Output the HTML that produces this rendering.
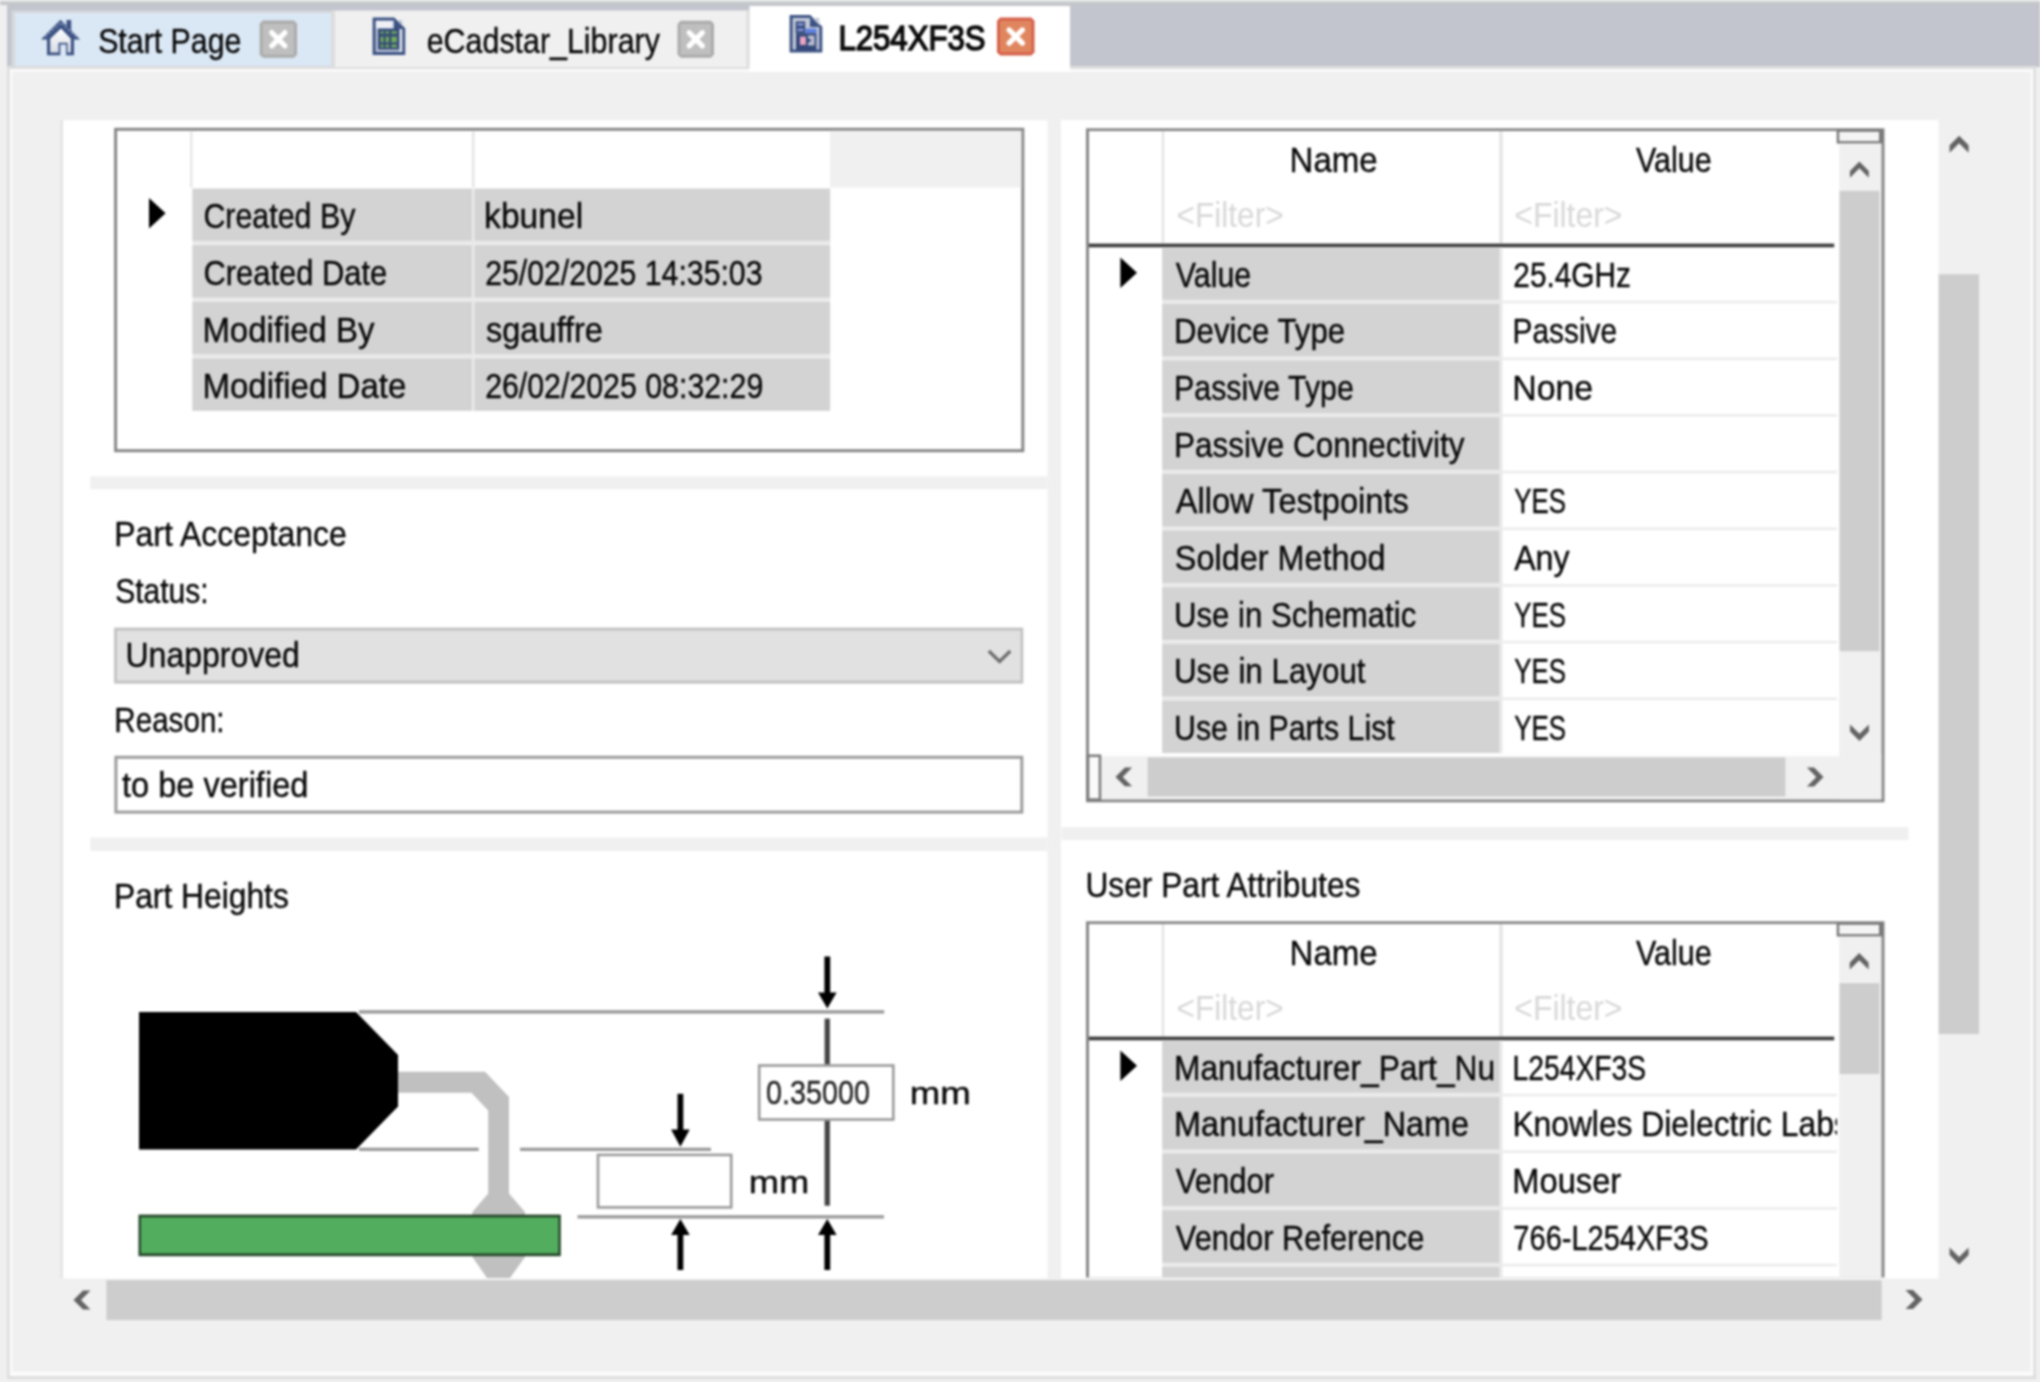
<!DOCTYPE html>
<html><head><meta charset="utf-8"><style>
html,body{margin:0;padding:0;width:2040px;height:1382px;overflow:hidden;background:#f0f0f0}
svg{display:block;font-family:"Liberation Sans", sans-serif;filter:blur(1px)}
</style></head><body>
<svg width="2040" height="1382" viewBox="0 0 2040 1382">
<defs><clipPath id="clipv"><rect x="1500" y="900" width="336.9" height="400"/></clipPath></defs>
<rect x="0.00" y="0.00" width="2040.00" height="1382.00" fill="#f0f0f0" />
<rect x="0.00" y="0.00" width="2040.00" height="1.60" fill="#e3ebea" />
<rect x="0.00" y="1.60" width="2040.00" height="3.40" fill="#c5c6c9" />
<rect x="7.00" y="5.00" width="2033.00" height="62.00" fill="#c2c5ce" />
<rect x="7.00" y="66.00" width="2029.00" height="1313.00" fill="#dedede" />
<rect x="9.70" y="69.00" width="2023.60" height="1307.00" fill="#fbfbfb" />
<rect x="12.20" y="71.80" width="2018.30" height="1299.70" fill="#f0f0f0" />
<rect x="11.50" y="10.50" width="323.50" height="56.50" fill="#d6d8dc" />
<rect x="15.00" y="13.00" width="316.50" height="53.00" fill="#dae7f4" />
<rect x="331.50" y="10.50" width="3.50" height="56.50" fill="#dcdcdc" />
<rect x="335.00" y="10.50" width="413.00" height="56.50" fill="#f0f0f0" />
<rect x="746.50" y="10.50" width="3.00" height="56.50" fill="#dedede" />
<rect x="749.50" y="6.00" width="320.50" height="66.00" fill="#ffffff" />
<rect x="60.50" y="120.30" width="2.50" height="1158.20" fill="#e3e3e3" />
<rect x="63.00" y="120.30" width="984.50" height="1158.20" fill="#ffffff" />
<rect x="1061.00" y="120.00" width="877.60" height="1158.50" fill="#ffffff" />
<rect x="90.20" y="476.50" width="957.30" height="12.70" fill="#f0f0f0" />
<rect x="90.20" y="837.50" width="957.30" height="13.50" fill="#f0f0f0" />
<rect x="1061.50" y="827.00" width="847.00" height="13.00" fill="#f0f0f0" />
<rect x="106.40" y="1280.20" width="1775.30" height="39.90" fill="#cdcdcd" />
<rect x="1938.60" y="274.30" width="40.40" height="759.70" fill="#cdcdcd" />
<rect x="114.10" y="127.80" width="910.20" height="324.40" fill="#878787" />
<rect x="117.10" y="130.80" width="904.20" height="318.40" fill="#ffffff" />
<rect x="830.10" y="130.80" width="191.20" height="56.70" fill="#f0f0f0" />
<rect x="190.00" y="130.80" width="2.40" height="56.70" fill="#e6e6e6" />
<rect x="471.80" y="130.80" width="2.80" height="56.70" fill="#e6e6e6" />
<rect x="192.40" y="188.60" width="637.70" height="222.21" fill="#eaeaea" />
<rect x="192.40" y="188.60" width="279.40" height="52.20" fill="#d3d3d3" />
<rect x="474.60" y="188.60" width="355.50" height="52.20" fill="#d3d3d3" />
<rect x="192.40" y="245.27" width="279.40" height="52.20" fill="#d3d3d3" />
<rect x="474.60" y="245.27" width="355.50" height="52.20" fill="#d3d3d3" />
<rect x="192.40" y="301.94" width="279.40" height="52.20" fill="#d3d3d3" />
<rect x="474.60" y="301.94" width="355.50" height="52.20" fill="#d3d3d3" />
<rect x="192.40" y="358.61" width="279.40" height="52.20" fill="#d3d3d3" />
<rect x="474.60" y="358.61" width="355.50" height="52.20" fill="#d3d3d3" />
<path d="M149,198 L165.6,213.2 L149,228.5 Z" fill="#000" stroke="none" stroke-width="0" />
<rect x="114.10" y="627.60" width="909.20" height="56.00" fill="#c2c2c2" />
<rect x="116.90" y="630.60" width="903.60" height="50.00" fill="#e1e1e1" />
<path d="M988.8,651 L999.6,661.4 L1010.3,651" fill="none" stroke="#6d6d6d" stroke-width="3.2" />
<rect x="114.40" y="755.80" width="908.90" height="57.80" fill="#9c9c9c" />
<rect x="117.40" y="758.80" width="902.90" height="51.80" fill="#ffffff" />
<path d="M398,1071.8 L485,1071.8 L509,1097 L509,1193.5 L525,1212 L525,1257 L510,1278 L487,1278 L472.4,1257 L472.4,1212 L488.2,1193.5 L488.2,1110.6 L471.4,1092.8 L398,1092.8 Z" fill="#c0c0c0" stroke="none" stroke-width="0" />
<path d="M139,1012 L356,1012 L398,1055 L398,1106.4 L356,1149.4 L139,1149.4 Z" fill="#000" stroke="none" stroke-width="0" />
<rect x="138.50" y="1214.60" width="422.30" height="41.60" fill="#26472a" />
<rect x="141.00" y="1217.40" width="417.30" height="36.00" fill="#52ae5e" />
<rect x="359.00" y="1010.20" width="525.20" height="3.40" fill="#9a9a9a" />
<rect x="359.00" y="1147.70" width="119.70" height="3.30" fill="#9a9a9a" />
<rect x="520.00" y="1147.70" width="191.00" height="3.30" fill="#9a9a9a" />
<rect x="577.50" y="1215.20" width="306.50" height="3.30" fill="#9a9a9a" />
<rect x="824.60" y="1018.60" width="5.30" height="45.90" fill="#444" />
<rect x="824.60" y="1120.50" width="5.30" height="85.20" fill="#444" />
<rect x="824.40" y="956.50" width="5.80" height="38.00" fill="#000" />
<path d="M818.0,992.5 L836.5999999999999,992.5 L827.3,1008.5 Z" fill="#000" stroke="none" stroke-width="0" />
<rect x="677.50" y="1093.80" width="5.80" height="37.70" fill="#000" />
<path d="M671.1,1129.5 L689.6999999999999,1129.5 L680.4,1146.7 Z" fill="#000" stroke="none" stroke-width="0" />
<rect x="677.50" y="1233.00" width="5.80" height="37.00" fill="#000" />
<path d="M671.1,1235 L689.6999999999999,1235 L680.4,1219 Z" fill="#000" stroke="none" stroke-width="0" />
<rect x="824.40" y="1233.00" width="5.80" height="37.00" fill="#000" />
<path d="M818.0,1235 L836.5999999999999,1235 L827.3,1219 Z" fill="#000" stroke="none" stroke-width="0" />
<rect x="757.90" y="1064.20" width="136.70" height="56.60" fill="#9a9a9a" />
<rect x="760.50" y="1066.80" width="131.50" height="51.40" fill="#fff" />
<rect x="596.70" y="1153.60" width="135.80" height="55.10" fill="#9a9a9a" />
<rect x="599.30" y="1156.20" width="130.60" height="49.90" fill="#fff" />
<rect x="1086.00" y="128.30" width="798.50" height="674.00" fill="#878787" />
<rect x="1089.00" y="131.10" width="792.30" height="668.20" fill="#ffffff" />
<rect x="1836.70" y="129.30" width="46.30" height="14.30" fill="#7a7a7a" />
<rect x="1839.20" y="131.80" width="39.80" height="9.30" fill="#f4f4f4" />
<rect x="1839.30" y="143.60" width="42.00" height="655.70" fill="#f0f0f0" />
<rect x="1839.60" y="190.90" width="39.80" height="460.30" fill="#cdcdcd" />
<rect x="1161.80" y="131.10" width="2.40" height="112.20" fill="#e3e3e3" />
<rect x="1499.40" y="131.10" width="3.20" height="112.20" fill="#e3e3e3" />
<rect x="1089.00" y="243.60" width="745.20" height="3.70" fill="#3c3c3c" />
<rect x="1162.20" y="247.30" width="340.40" height="506.00" fill="#eaeaea" />
<rect x="1162.20" y="247.30" width="337.20" height="52.40" fill="#d3d3d3" />
<rect x="1502.60" y="300.80" width="334.30" height="2.50" fill="#ebebeb" />
<rect x="1162.20" y="303.97" width="337.20" height="52.40" fill="#d3d3d3" />
<rect x="1502.60" y="357.47" width="334.30" height="2.50" fill="#ebebeb" />
<rect x="1162.20" y="360.64" width="337.20" height="52.40" fill="#d3d3d3" />
<rect x="1502.60" y="414.14" width="334.30" height="2.50" fill="#ebebeb" />
<rect x="1162.20" y="417.31" width="337.20" height="52.40" fill="#d3d3d3" />
<rect x="1502.60" y="470.81" width="334.30" height="2.50" fill="#ebebeb" />
<rect x="1162.20" y="473.98" width="337.20" height="52.40" fill="#d3d3d3" />
<rect x="1502.60" y="527.48" width="334.30" height="2.50" fill="#ebebeb" />
<rect x="1162.20" y="530.65" width="337.20" height="52.40" fill="#d3d3d3" />
<rect x="1502.60" y="584.15" width="334.30" height="2.50" fill="#ebebeb" />
<rect x="1162.20" y="587.32" width="337.20" height="52.40" fill="#d3d3d3" />
<rect x="1502.60" y="640.82" width="334.30" height="2.50" fill="#ebebeb" />
<rect x="1162.20" y="643.99" width="337.20" height="52.40" fill="#d3d3d3" />
<rect x="1502.60" y="697.49" width="334.30" height="2.50" fill="#ebebeb" />
<rect x="1162.20" y="700.66" width="337.20" height="52.40" fill="#d3d3d3" />
<rect x="1502.60" y="754.16" width="334.30" height="2.50" fill="#ebebeb" />
<path d="M1120.4,257.6 L1137,272.8 L1120.4,288 Z" fill="#000" stroke="none" stroke-width="0" />
<rect x="1089.00" y="753.30" width="792.30" height="46.00" fill="#f0f0f0" />
<rect x="1089.00" y="753.30" width="750.30" height="3.00" fill="#ffffff" />
<rect x="1147.60" y="757.40" width="637.80" height="39.10" fill="#cdcdcd" />
<rect x="1086.80" y="754.50" width="14.40" height="46.30" fill="#7a7a7a" />
<rect x="1089.30" y="757.00" width="9.40" height="41.30" fill="#fafafa" />
<rect x="1086.00" y="921.30" width="798.50" height="356.20" fill="#878787" />
<rect x="1089.00" y="924.10" width="792.30" height="353.40" fill="#ffffff" />
<rect x="1836.70" y="922.30" width="46.30" height="14.30" fill="#7a7a7a" />
<rect x="1839.20" y="924.80" width="39.80" height="9.30" fill="#f4f4f4" />
<rect x="1839.30" y="936.60" width="42.00" height="340.90" fill="#f0f0f0" />
<rect x="1839.60" y="983.20" width="39.80" height="90.80" fill="#cdcdcd" />
<rect x="1161.80" y="924.10" width="2.40" height="112.20" fill="#e3e3e3" />
<rect x="1499.40" y="924.10" width="3.20" height="112.20" fill="#e3e3e3" />
<rect x="1089.00" y="1036.60" width="745.20" height="3.70" fill="#3c3c3c" />
<rect x="1162.20" y="1040.30" width="340.40" height="237.20" fill="#eaeaea" />
<rect x="1162.20" y="1040.30" width="337.20" height="52.40" fill="#d3d3d3" />
<rect x="1502.60" y="1093.80" width="334.30" height="2.50" fill="#ebebeb" />
<rect x="1162.20" y="1096.97" width="337.20" height="52.40" fill="#d3d3d3" />
<rect x="1502.60" y="1150.47" width="334.30" height="2.50" fill="#ebebeb" />
<rect x="1162.20" y="1153.64" width="337.20" height="52.40" fill="#d3d3d3" />
<rect x="1502.60" y="1207.14" width="334.30" height="2.50" fill="#ebebeb" />
<rect x="1162.20" y="1210.31" width="337.20" height="52.40" fill="#d3d3d3" />
<rect x="1502.60" y="1263.81" width="334.30" height="2.50" fill="#ebebeb" />
<rect x="1162.20" y="1266.98" width="337.20" height="10.52" fill="#d3d3d3" />
<path d="M1120.4,1050.6 L1137,1065.8 L1120.4,1081 Z" fill="#000" stroke="none" stroke-width="0" />
<path d="M1949.60,145.20 L1959.10,135.70 L1968.60,145.20 L1968.60,152.70 L1959.10,143.20 L1949.60,152.70 Z" fill="#636363" stroke="none" stroke-width="0" />
<path d="M1949.60,1255.00 L1959.10,1264.50 L1968.60,1255.00 L1968.60,1247.50 L1959.10,1257.00 L1949.60,1247.50 Z" fill="#636363" stroke="none" stroke-width="0" />
<path d="M83.00,1290.50 L73.50,1300.00 L83.00,1309.50 L90.50,1309.50 L81.00,1300.00 L90.50,1290.50 Z" fill="#636363" stroke="none" stroke-width="0" />
<path d="M1913.00,1290.00 L1922.50,1299.50 L1913.00,1309.00 L1905.50,1309.00 L1915.00,1299.50 L1905.50,1290.00 Z" fill="#636363" stroke="none" stroke-width="0" />
<path d="M1850.00,170.90 L1859.40,161.50 L1868.80,170.90 L1868.80,177.70 L1859.40,168.30 L1850.00,177.70 Z" fill="#636363" stroke="none" stroke-width="0" />
<path d="M1850.10,731.60 L1859.50,741.00 L1868.90,731.60 L1868.90,724.40 L1859.50,733.80 L1850.10,724.40 Z" fill="#636363" stroke="none" stroke-width="0" />
<path d="M1849.80,962.40 L1859.20,953.00 L1868.60,962.40 L1868.60,969.60 L1859.20,960.20 L1849.80,969.60 Z" fill="#636363" stroke="none" stroke-width="0" />
<path d="M1124.90,767.50 L1115.50,776.90 L1124.90,786.30 L1132.10,786.30 L1122.70,776.90 L1132.10,767.50 Z" fill="#636363" stroke="none" stroke-width="0" />
<path d="M1814.10,767.60 L1823.50,777.00 L1814.10,786.40 L1806.90,786.40 L1816.30,777.00 L1806.90,767.60 Z" fill="#636363" stroke="none" stroke-width="0" />
<path d="M262.9,20.6 L293.8,20.6 L297,23.8 L297,54.599999999999994 L293.8,57.8 L262.9,57.8 L259.7,54.599999999999994 L259.7,23.8 Z" fill="#ababab" stroke="none" stroke-width="0" />
<rect x="262.70" y="23.60" width="31.30" height="31.20" fill="#bfbfbf" />
<path d="M271.75,32.6 L284.95000000000005,45.800000000000004 M284.95000000000005,32.6 L271.75,45.800000000000004" fill="none" stroke="#fff" stroke-width="5.2" stroke-linecap="round"/>
<path d="M680.7,20.8 L710.8,20.8 L714,24.0 L714,54.599999999999994 L710.8,57.8 L680.7,57.8 L677.5,54.599999999999994 L677.5,24.0 Z" fill="#ababab" stroke="none" stroke-width="0" />
<rect x="680.50" y="23.80" width="30.50" height="31.00" fill="#bfbfbf" />
<path d="M689.15,32.699999999999996 L702.35,45.9 M702.35,32.699999999999996 L689.15,45.9" fill="none" stroke="#fff" stroke-width="5.2" stroke-linecap="round"/>
<path d="M1000.2,17.6 L1031.3,17.6 L1034.5,20.8 L1034.5,52.199999999999996 L1031.3,55.4 L1000.2,55.4 L997,52.199999999999996 L997,20.8 Z" fill="#d5604a" stroke="none" stroke-width="0" />
<rect x="1000.00" y="20.60" width="31.50" height="31.80" fill="#e0865f" />
<path d="M1009.15,29.9 L1022.35,43.1 M1022.35,29.9 L1009.15,43.1" fill="none" stroke="#fff" stroke-width="5.2" stroke-linecap="round"/>
<path d="M41,39.5 L60.5,19.8 L66.5,25.8 L66.5,20 L71.2,20 L71.2,30.5 L80,39.5 L74,39.5 L74,55.2 L66.1,55.2 L66.1,44.6 L60.3,44.6 L60.3,55.2 L47,55.2 L47,39.5 Z" fill="#3c5283" stroke="none" stroke-width="0" />
<defs><linearGradient id="hg" x1="0" y1="0" x2="0" y2="1"><stop offset="0" stop-color="#ffffff"/><stop offset="1" stop-color="#d9dce6"/></linearGradient></defs>
<path d="M50.2,38.8 L61,28.6 L70.8,38.8 L70.8,52.5 L67.6,52.5 L67.6,42.8 L58.5,42.8 L58.5,52.5 L50.2,52.5 Z" fill="url(#hg)" stroke="none" stroke-width="0" />
<path d="M45.5,36.5 L60.8,22.5 L76,36.5" fill="none" stroke="#8e9dbf" stroke-width="1.6" stroke-dasharray="2.2 2.2"/>
<path d="M372.6,17.4 L394,17.4 L405.2,28.3 L405.2,55 L372.6,55 Z" fill="#3c5283" stroke="none" stroke-width="0" />
<rect x="375.60" y="20.40" width="26.60" height="31.60" fill="#b9c0d3" />
<rect x="375.90" y="21.00" width="16.60" height="7.30" fill="#eef0f6" />
<path d="M394,17.4 L394,29 L405.2,29 Z" fill="#3c5283" stroke="none" stroke-width="0" />
<rect x="399.50" y="29.00" width="2.70" height="23.00" fill="#e2e5ee" />
<rect x="378.00" y="28.60" width="21.40" height="21.00" fill="#34497a" />
<rect x="380.60" y="31.20" width="2.90" height="2.50" fill="#72ad5a" />
<rect x="380.60" y="36.60" width="2.90" height="5.80" fill="#72ad5a" />
<rect x="380.60" y="44.60" width="2.90" height="2.90" fill="#72ad5a" />
<rect x="385.60" y="31.20" width="3.30" height="2.50" fill="#72ad5a" />
<rect x="385.60" y="36.60" width="3.30" height="5.80" fill="#72ad5a" />
<rect x="385.60" y="44.60" width="3.30" height="2.90" fill="#72ad5a" />
<rect x="391.40" y="31.20" width="5.40" height="2.50" fill="#72ad5a" />
<rect x="391.40" y="36.60" width="5.40" height="5.80" fill="#72ad5a" />
<rect x="391.40" y="44.60" width="5.40" height="2.90" fill="#72ad5a" />
<path d="M789.6,14.9 L810.2,14.9 L822.3,26.8 L822.3,52.5 L789.6,52.5 Z" fill="#3c5283" stroke="none" stroke-width="0" />
<rect x="792.60" y="17.90" width="26.70" height="31.60" fill="#c3c8d8" />
<path d="M810,15.5 L810,27 L821,27 Z" fill="#3c5283" stroke="none" stroke-width="0" />
<rect x="795.70" y="21.40" width="9.50" height="11.90" fill="#34497a" />
<rect x="797.50" y="23.20" width="6.00" height="2.50" fill="#8b9ad6" />
<rect x="797.50" y="28.60" width="6.00" height="2.60" fill="#8b9ad6" />
<rect x="805.20" y="28.60" width="11.50" height="4.70" fill="#5f80df" />
<rect x="796.00" y="33.30" width="20.50" height="16.70" fill="#34497a" />
<rect x="800.00" y="36.60" width="5.90" height="8.30" fill="#eaa5c2" />
<rect x="808.00" y="35.50" width="6.50" height="10.00" fill="#b9bfcf" />
<path d="M808,38 L811.5,40.5 L808,43 Z" fill="#34497a" stroke="none" stroke-width="0" />
<text x="203.43" y="228.20" font-size="35" fill="#080808" stroke="#080808" stroke-width="0.38" textLength="151.93" lengthAdjust="spacingAndGlyphs">Created By</text>
<text x="484.08" y="228.20" font-size="35" fill="#080808" stroke="#080808" stroke-width="0.38" textLength="99.13" lengthAdjust="spacingAndGlyphs">kbunel</text>
<text x="203.42" y="284.87" font-size="35" fill="#080808" stroke="#080808" stroke-width="0.38" textLength="183.88" lengthAdjust="spacingAndGlyphs">Created Date</text>
<text x="485.14" y="284.87" font-size="35" fill="#080808" stroke="#080808" stroke-width="0.38" textLength="277.33" lengthAdjust="spacingAndGlyphs">25/02/2025 14:35:03</text>
<text x="202.42" y="341.54" font-size="35" fill="#080808" stroke="#080808" stroke-width="0.38" textLength="172.11" lengthAdjust="spacingAndGlyphs">Modified By</text>
<text x="486.00" y="341.54" font-size="35" fill="#080808" stroke="#080808" stroke-width="0.38" textLength="116.86" lengthAdjust="spacingAndGlyphs">sgauffre</text>
<text x="202.41" y="398.21" font-size="35" fill="#080808" stroke="#080808" stroke-width="0.38" textLength="203.97" lengthAdjust="spacingAndGlyphs">Modified Date</text>
<text x="485.13" y="398.21" font-size="35" fill="#080808" stroke="#080808" stroke-width="0.38" textLength="278.14" lengthAdjust="spacingAndGlyphs">26/02/2025 08:32:29</text>
<text x="114.19" y="546.10" font-size="35" fill="#080808" stroke="#080808" stroke-width="0.38" textLength="232.64" lengthAdjust="spacingAndGlyphs">Part Acceptance</text>
<text x="115.14" y="602.50" font-size="35" fill="#080808" stroke="#080808" stroke-width="0.38" textLength="93.50" lengthAdjust="spacingAndGlyphs">Status:</text>
<text x="125.47" y="666.50" font-size="35" fill="#080808" stroke="#080808" stroke-width="0.38" textLength="174.37" lengthAdjust="spacingAndGlyphs">Unapproved</text>
<text x="114.31" y="732.30" font-size="35" fill="#080808" stroke="#080808" stroke-width="0.38" textLength="110.30" lengthAdjust="spacingAndGlyphs">Reason:</text>
<text x="122.00" y="797.00" font-size="35" fill="#080808" stroke="#080808" stroke-width="0.38" textLength="186.36" lengthAdjust="spacingAndGlyphs">to be verified</text>
<text x="113.98" y="907.70" font-size="35" fill="#080808" stroke="#080808" stroke-width="0.38" textLength="174.87" lengthAdjust="spacingAndGlyphs">Part Heights</text>
<text x="766.12" y="1103.60" font-size="32.5" fill="#222" stroke="#222" stroke-width="0.38" textLength="103.83" lengthAdjust="spacingAndGlyphs">0.35000</text>
<text x="909.84" y="1103.60" font-size="31" fill="#080808" stroke="#080808" stroke-width="0.38" textLength="61.02" lengthAdjust="spacingAndGlyphs">mm</text>
<text x="748.66" y="1192.70" font-size="31" fill="#080808" stroke="#080808" stroke-width="0.38" textLength="60.48" lengthAdjust="spacingAndGlyphs">mm</text>
<text x="1289.61" y="171.60" font-size="35" fill="#080808" stroke="#080808" stroke-width="0.38" textLength="88.07" lengthAdjust="spacingAndGlyphs">Name</text>
<text x="1635.90" y="172.00" font-size="35" fill="#080808" stroke="#080808" stroke-width="0.38" textLength="75.78" lengthAdjust="spacingAndGlyphs">Value</text>
<text x="1176.60" y="227.40" font-size="35" fill="#d8d8d8" textLength="107.00" lengthAdjust="spacingAndGlyphs">&lt;Filter&gt;</text>
<text x="1514.29" y="227.40" font-size="35" fill="#d8d8d8" textLength="108.23" lengthAdjust="spacingAndGlyphs">&lt;Filter&gt;</text>
<text x="1175.80" y="286.70" font-size="35" fill="#080808" stroke="#080808" stroke-width="0.38" textLength="75.37" lengthAdjust="spacingAndGlyphs">Value</text>
<text x="1513.35" y="286.70" font-size="35" fill="#080808" stroke="#080808" stroke-width="0.38" textLength="117.53" lengthAdjust="spacingAndGlyphs">25.4GHz</text>
<text x="1174.02" y="343.37" font-size="35" fill="#080808" stroke="#080808" stroke-width="0.38" textLength="171.18" lengthAdjust="spacingAndGlyphs">Device Type</text>
<text x="1512.49" y="343.37" font-size="35" fill="#080808" stroke="#080808" stroke-width="0.38" textLength="104.66" lengthAdjust="spacingAndGlyphs">Passive</text>
<text x="1174.07" y="400.04" font-size="35" fill="#080808" stroke="#080808" stroke-width="0.38" textLength="179.69" lengthAdjust="spacingAndGlyphs">Passive Type</text>
<text x="1512.26" y="400.04" font-size="35" fill="#080808" stroke="#080808" stroke-width="0.38" textLength="80.95" lengthAdjust="spacingAndGlyphs">None</text>
<text x="1174.00" y="456.71" font-size="35" fill="#080808" stroke="#080808" stroke-width="0.38" textLength="290.55" lengthAdjust="spacingAndGlyphs">Passive Connectivity</text>
<text x="1175.80" y="513.38" font-size="35" fill="#080808" stroke="#080808" stroke-width="0.38" textLength="232.96" lengthAdjust="spacingAndGlyphs">Allow Testpoints</text>
<text x="1514.20" y="513.38" font-size="35" fill="#080808" stroke="#080808" stroke-width="0.38" textLength="51.79" lengthAdjust="spacingAndGlyphs">YES</text>
<text x="1174.87" y="570.05" font-size="35" fill="#080808" stroke="#080808" stroke-width="0.38" textLength="210.68" lengthAdjust="spacingAndGlyphs">Solder Method</text>
<text x="1514.20" y="570.05" font-size="35" fill="#080808" stroke="#080808" stroke-width="0.38" textLength="55.34" lengthAdjust="spacingAndGlyphs">Any</text>
<text x="1174.02" y="626.72" font-size="35" fill="#080808" stroke="#080808" stroke-width="0.38" textLength="242.22" lengthAdjust="spacingAndGlyphs">Use in Schematic</text>
<text x="1514.20" y="626.72" font-size="35" fill="#080808" stroke="#080808" stroke-width="0.38" textLength="51.79" lengthAdjust="spacingAndGlyphs">YES</text>
<text x="1174.01" y="683.39" font-size="35" fill="#080808" stroke="#080808" stroke-width="0.38" textLength="191.54" lengthAdjust="spacingAndGlyphs">Use in Layout</text>
<text x="1514.20" y="683.39" font-size="35" fill="#080808" stroke="#080808" stroke-width="0.38" textLength="51.79" lengthAdjust="spacingAndGlyphs">YES</text>
<text x="1174.07" y="740.06" font-size="35" fill="#080808" stroke="#080808" stroke-width="0.38" textLength="220.69" lengthAdjust="spacingAndGlyphs">Use in Parts List</text>
<text x="1514.20" y="740.06" font-size="35" fill="#080808" stroke="#080808" stroke-width="0.38" textLength="51.79" lengthAdjust="spacingAndGlyphs">YES</text>
<text x="1085.40" y="897.00" font-size="35" fill="#080808" stroke="#080808" stroke-width="0.38" textLength="275.05" lengthAdjust="spacingAndGlyphs">User Part Attributes</text>
<text x="1289.61" y="964.60" font-size="35" fill="#080808" stroke="#080808" stroke-width="0.38" textLength="88.07" lengthAdjust="spacingAndGlyphs">Name</text>
<text x="1635.90" y="965.00" font-size="35" fill="#080808" stroke="#080808" stroke-width="0.38" textLength="75.78" lengthAdjust="spacingAndGlyphs">Value</text>
<text x="1176.60" y="1020.40" font-size="35" fill="#d8d8d8" textLength="107.00" lengthAdjust="spacingAndGlyphs">&lt;Filter&gt;</text>
<text x="1514.29" y="1020.40" font-size="35" fill="#d8d8d8" textLength="108.23" lengthAdjust="spacingAndGlyphs">&lt;Filter&gt;</text>
<text x="1173.99" y="1079.70" font-size="35" fill="#080808" stroke="#080808" stroke-width="0.38" textLength="321.14" lengthAdjust="spacingAndGlyphs">Manufacturer_Part_Nu</text>
<text x="1512.59" y="1079.70" font-size="35" fill="#080808" stroke="#080808" stroke-width="0.38" textLength="133.50" lengthAdjust="spacingAndGlyphs">L254XF3S</text>
<text x="1173.95" y="1136.37" font-size="35" fill="#080808" stroke="#080808" stroke-width="0.38" textLength="295.11" lengthAdjust="spacingAndGlyphs">Manufacturer_Name</text>
<text x="1512.38" y="1136.37" font-size="35" fill="#080808" stroke="#080808" stroke-width="0.38" clip-path="url(#clipv)" textLength="337.33" lengthAdjust="spacingAndGlyphs">Knowles Dielectric Labs</text>
<text x="1175.80" y="1193.04" font-size="35" fill="#080808" stroke="#080808" stroke-width="0.38" textLength="98.39" lengthAdjust="spacingAndGlyphs">Vendor</text>
<text x="1512.33" y="1193.04" font-size="35" fill="#080808" stroke="#080808" stroke-width="0.38" textLength="108.84" lengthAdjust="spacingAndGlyphs">Mouser</text>
<text x="1175.80" y="1249.71" font-size="35" fill="#080808" stroke="#080808" stroke-width="0.38" textLength="248.49" lengthAdjust="spacingAndGlyphs">Vendor Reference</text>
<text x="1513.37" y="1249.71" font-size="35" fill="#080808" stroke="#080808" stroke-width="0.38" textLength="195.14" lengthAdjust="spacingAndGlyphs">766-L254XF3S</text>
<text x="98.13" y="52.90" font-size="35" fill="#080808" stroke="#080808" stroke-width="0.38" textLength="143.34" lengthAdjust="spacingAndGlyphs">Start Page</text>
<text x="426.73" y="52.70" font-size="35" fill="#080808" stroke="#080808" stroke-width="0.38" textLength="233.13" lengthAdjust="spacingAndGlyphs">eCadstar_Library</text>
<text x="838.42" y="50.00" font-size="35" fill="#0a0a0a" stroke="#0a0a0a" stroke-width="1.5" textLength="147.07" lengthAdjust="spacingAndGlyphs">L254XF3S</text>
</svg></body></html>
